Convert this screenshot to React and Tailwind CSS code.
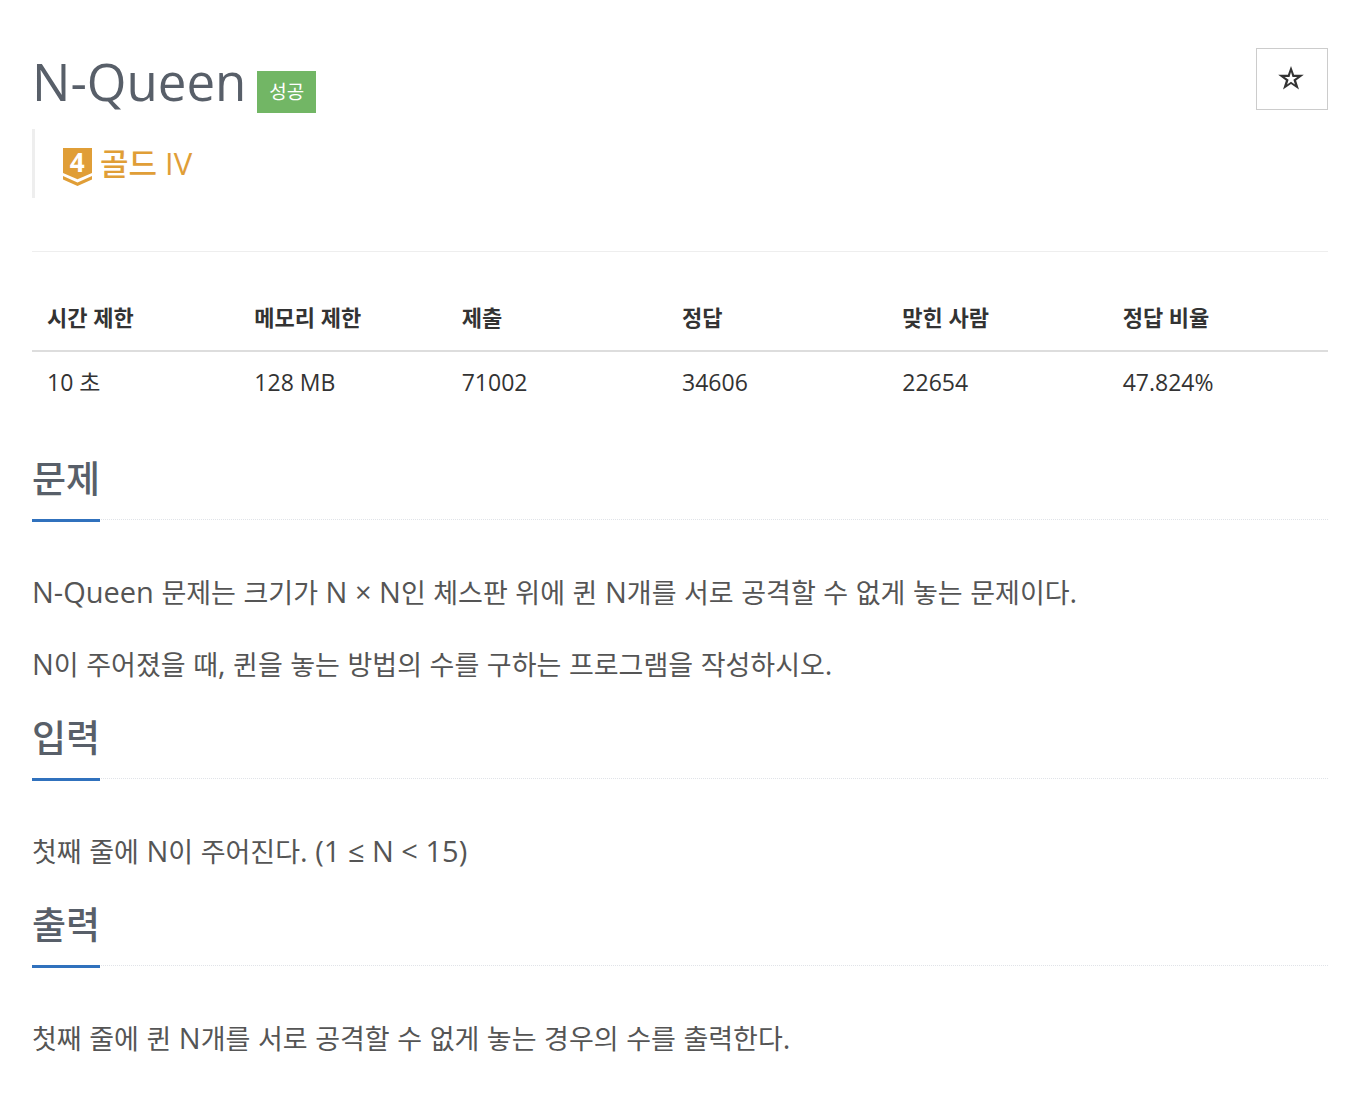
import React from 'react';

const stats = [
    { label: '시간 제한', value: '10 초', width: 'w-[16%]' },
    { label: '메모리 제한', value: '128 MB', width: 'w-[16%]' },
    { label: '제출', value: '71002', width: 'w-[17%]' },
    { label: '정답', value: '34606', width: 'w-[17%]' },
    { label: '맞힌 사람', value: '22654', width: 'w-[17%]' },
    { label: '정답 비율', value: '47.824%', width: 'w-[17%]' },
];

function TierBadge() {
    return (
        <svg viewBox="0 0 29 38" className="h-[38px] w-[29px] overflow-visible" aria-hidden="true">
            <path d="M0 0h29v25l-14.500 6.300L0 25z" fill="#e09e37" />
            <path d="M0 28l14.500 6.500L29 28v3.400L14.500 38 0 31.400z" fill="#e09e37" />
            <text x="14.200" y="24.300" textAnchor="middle" className="fill-white text-[26px] font-bold">4</text>
        </svg>
    );
}

function StarIcon() {
    return (
        <svg viewBox="0 0 26 24" className="mr-0.5 mb-0.5 h-6 w-[26px]" aria-hidden="true">
            <path
                fill="#333"
                fillRule="evenodd"
                d="M13 0l3.100 8.800h9.700l-7.700 5.600 2.900 9.100-8-5.600-8 5.600 2.900-9.100L.2 8.800h9.700zM13 6l-1.500 4.900H6.700l3.900 2.900-1.500 4.800 3.900-2.900 3.900 2.900-1.500-4.800 3.900-2.900h-4.800z"
            />
        </svg>
    );
}

// Latin letters and digits are set a little larger than Hangul
function Paragraph({ text }) {
    return (
        <p>
            {text.split(/([^가-힣]+)/).map((part, i) => (
                i % 2 ? <span key={i} className="text-[29px]">{part}</span> : part
            ))}
        </p>
    );
}

function Section({ title, lines }) {
    return (
        <section>
            <div className="mb-12 flex border-b border-dotted border-[#e0e3e8]">
                <h2 className="-mb-[3px] border-b-3 border-[#3071bd] pb-[11px] text-[37px] leading-[58px] font-medium text-[#585f69]">
                    {title}
                </h2>
            </div>
            <div className="space-y-6 text-[27px] leading-[47px] text-[#555]">
                {lines.map((line) => <Paragraph key={line} text={line} />)}
            </div>
        </section>
    );
}

export default function App() {
    return (
        <main className="bg-white pt-12 pr-6 pb-7 pl-8 font-['Open_Sans','Noto_Sans_CJK_KR',sans-serif] text-[#333]">
            <header className="flex items-start justify-between">
                <div className="flex items-end">
                    <h1 className="text-[51px] leading-[64px] text-[#585f69]">N-Queen</h1>
                    <span className="mt-[23px] ml-[11px] bg-[#72b665] px-3 text-[19px] leading-[42px] text-white">성공</span>
                </div>
                <button type="button" aria-label="즐겨찾기" className="flex h-[62px] w-[72px] items-center justify-center border border-[#ccc] bg-white">
                    <StarIcon />
                </button>
            </header>

            <div className="mt-4 flex items-end border-l-3 border-[#eee] pt-[11px] pb-3 pl-7 text-[#e09e37]">
                <TierBadge />
                <span className="ml-2 text-[31px] leading-[46px] font-medium">골드 IV</span>
            </div>

            <hr className="mt-[53px] mb-[35px] border-[#eee]" />

            <table className="w-full table-fixed text-left leading-[31px]">
                <thead>
                    <tr className="border-b-2 border-[#ddd]">
                        {stats.map((s) => (
                            <th key={s.label} className={`${s.width} px-[15px] pt-[15px] pb-[17px] text-[22px] font-bold`}>{s.label}</th>
                        ))}
                    </tr>
                </thead>
                <tbody>
                    <tr>
                        {stats.map((s) => (
                            <td key={s.label} className="p-[15px] text-[23px]">{s.value}</td>
                        ))}
                    </tr>
                </tbody>
            </table>

            <div className="mt-[37px] space-y-[21px]">
                <Section
                    title="문제"
                    lines={[
                        'N-Queen 문제는 크기가 N × N인 체스판 위에 퀸 N개를 서로 공격할 수 없게 놓는 문제이다.',
                        'N이 주어졌을 때, 퀸을 놓는 방법의 수를 구하는 프로그램을 작성하시오.',
                    ]}
                />
                <Section title="입력" lines={['첫째 줄에 N이 주어진다. (1 ≤ N < 15)']} />
                <Section title="출력" lines={['첫째 줄에 퀸 N개를 서로 공격할 수 없게 놓는 경우의 수를 출력한다.']} />
            </div>
        </main>
    );
}
